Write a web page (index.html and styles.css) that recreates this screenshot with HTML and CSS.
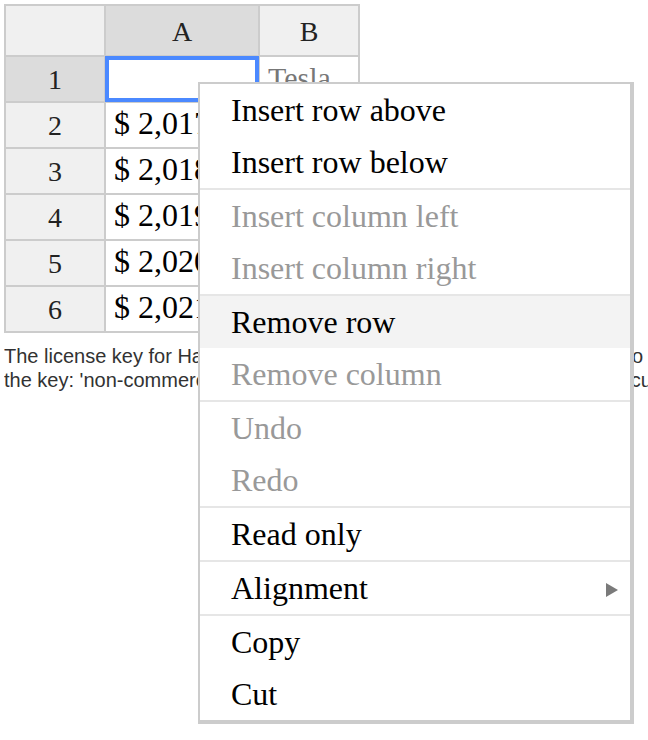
FILE: index.html
```html
<!DOCTYPE html>
<html>
<head>
<meta charset="utf-8">
<link rel="stylesheet" href="styles.css">
</head>
<body>
<div class="page">
  <div class="sheet">
    <div class="corner"></div>
    <div class="colhead hl">A</div>
    <div class="colhead">B</div>

    <div class="rowhead hl">1</div>
    <div class="cell selected"></div>
    <div class="cell muted">Tesla</div>

    <div class="rowhead">2</div>
    <div class="cell">$ 2,017</div>
    <div class="cell"></div>

    <div class="rowhead">3</div>
    <div class="cell">$ 2,018</div>
    <div class="cell"></div>

    <div class="rowhead">4</div>
    <div class="cell">$ 2,019</div>
    <div class="cell"></div>

    <div class="rowhead">5</div>
    <div class="cell">$ 2,020</div>
    <div class="cell"></div>

    <div class="rowhead">6</div>
    <div class="cell">$ 2,021</div>
    <div class="cell"></div>
  </div>

  <div class="license-wrap">
    <p class="license">The license key for Handsontable is missing. Use your purchased key to activate the product. Alternatively, you can activate Handsontable to use for non-commercial purposes by passing<br>the key: 'non-commercial-and-evaluation'. Read more about it in the documentation or contact us at support@handsontable.com.</p>
  </div>

  <div class="menu">
    <div class="item">Insert row above</div>
    <div class="item">Insert row below</div>
    <div class="sep"></div>
    <div class="item disabled">Insert column left</div>
    <div class="item disabled">Insert column right</div>
    <div class="sep"></div>
    <div class="item current">Remove row</div>
    <div class="item disabled">Remove column</div>
    <div class="sep"></div>
    <div class="item disabled">Undo</div>
    <div class="item disabled">Redo</div>
    <div class="sep"></div>
    <div class="item">Read only</div>
    <div class="sep"></div>
    <div class="item submenu">Alignment<svg class="arrow" width="12" height="14" viewBox="0 0 12 14"><polygon points="0,0 12,7 0,14" fill="#7a7a7a"/></svg></div>
    <div class="sep"></div>
    <div class="item">Copy</div>
    <div class="item">Cut</div>
  </div>
</div>
</body>
</html>
```

FILE: styles.css
```css
html, body {
  margin: 0;
  padding: 0;
  background: #fff;
  overflow: hidden;
}

.page {
  position: relative;
  padding: 4px 0 4px 4px;
  width: 644px;
  height: 732px;
  overflow: hidden;
}

.sheet {
  display: grid;
  grid-template-columns: 98px 152px 98px;
  grid-template-rows: 49px repeat(6, 44px);
  gap: 2px;
  padding: 2px;
  background: #cccccc;
  width: max-content;
  font-family: "Liberation Serif", "Times New Roman", serif;
}

.corner,
.colhead,
.rowhead {
  background: #f0f0f0;
  color: #222;
  font-size: 28px;
  text-align: center;
}

.colhead {
  line-height: 51px;
}

.rowhead {
  line-height: 45px;
}

.hl {
  background: #dcdcdc;
}

.cell {
  background: #fff;
  color: #000;
  font-size: 32px;
  line-height: 40px;
  padding: 0 8px;
  white-space: nowrap;
  overflow: hidden;
}

.cell.muted {
  color: #777;
  font-size: 30px;
  line-height: 42px;
}

.cell.selected {
  outline: 4px solid #4b89ff;
  outline-offset: -3px;
}

.license-wrap {
  width: 644px;
  overflow: hidden;
}

.license {
  margin: 0;
  padding: 11px 0 6px;
  font-family: "Liberation Sans", Arial, Helvetica, sans-serif;
  font-size: 20px;
  line-height: 24px;
  color: #323232;
  white-space: nowrap;
}

.menu {
  position: absolute;
  left: 198px;
  top: 82px;
  width: 430px;
  background: #fff;
  border: 2px solid #cccccc;
  border-right-width: 4px;
  border-bottom-width: 4px;
  font-family: "Liberation Serif", "Times New Roman", serif;
  font-size: 32px;
  color: #000;
}

.item {
  position: relative;
  height: 52px;
  line-height: 52px;
  padding-left: 31px;
  white-space: nowrap;
}

.item.disabled {
  color: #999;
}

.item.current {
  background: #f3f3f3;
}

.sep {
  height: 2px;
  background: #e6e6e6;
}

.arrow {
  position: absolute;
  right: 12px;
  top: 21px;
}
```
